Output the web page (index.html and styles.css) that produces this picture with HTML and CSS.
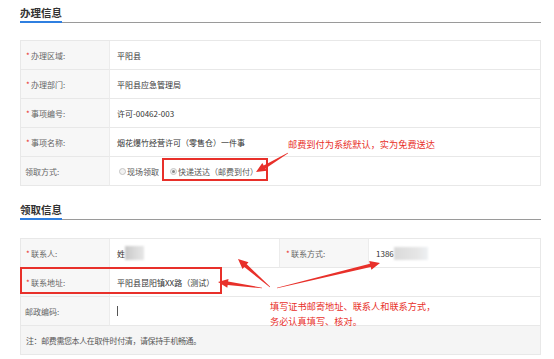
FILE: index.html
```html
<!DOCTYPE html>
<html lang="zh-CN">
<head>
<meta charset="utf-8">
<title>办理信息</title>
<link rel="stylesheet" href="styles.css">
</head>
<body>
<div class="page">
  <div class="sec-head"><span class="sec-title">办理信息</span></div>
  <div class="table t1">
    <div class="lbl"><span class="req">*</span>办理区域:</div>
    <div class="val">平阳县</div>
    <div class="lbl"><span class="req">*</span>办理部门:</div>
    <div class="val">平阳县应急管理局</div>
    <div class="lbl"><span class="req">*</span>事项编号:</div>
    <div class="val">许可-00462-003</div>
    <div class="lbl"><span class="req">*</span>事项名称:</div>
    <div class="val">烟花爆竹经营许可（零售仓）一件事</div>
    <div class="lbl plain">领取方式:</div>
    <div class="val radios">
      <span class="radio"><i class="dot"></i>现场领取</span>
      <span class="radio on"><i class="dot"></i>快递送达（邮费到付）</span>
    </div>
  </div>

  <div class="sec-head second"><span class="sec-title">领取信息</span></div>
  <div class="table t2">
    <div class="lbl"><span class="req">*</span>联系人:</div>
    <div class="val">姓<span class="blur b1"></span></div>
    <div class="lbl lbl2"><span class="req">*</span>联系方式:</div>
    <div class="val">1386<span class="blur b2"></span></div>
    <div class="lbl"><span class="req">*</span>联系地址:</div>
    <div class="val span3">平阳县昆阳镇XX路（测试）</div>
    <div class="lbl plain">邮政编码:</div>
    <div class="val span3"><span class="caret"></span></div>
    <div class="note">注：邮费需您本人在取件时付清，请保持手机畅通。</div>
  </div>

  <div class="anno a1">邮费到付为系统默认，实为免费送达</div>
  <div class="anno a2">填写证书邮寄地址、联系人和联系方式，<br>务必认真填写、核对。</div>

  <svg class="overlay" width="554" height="359" viewBox="0 0 554 359">
    <rect x="163" y="159" width="104" height="21" fill="none" stroke="#e8302a" stroke-width="2"/>
    <rect x="21" y="268" width="200" height="25" fill="none" stroke="#e8302a" stroke-width="2"/>
    <polygon fill="#e8302a" points="288.15,153.26 265.5,168.4 266.9,170.8 256,172 262.3,163.0 263.7,165.4 287.85,152.74"/>
    <polygon fill="#e8302a" points="270.2,286.8 246.7,264.2 248.5,262.2 238,259 242.5,269.0 244.3,267.0 269.8,287.2"/>
    <polygon fill="#e8302a" points="262.04,287.7 228.1,281.6 228.5,278.9 218,282 227.3,287.8 227.7,285.1 261.96,288.3"/>
    <polygon fill="#e8302a" points="277.07,288.3 370.7,267.1 371.4,269.8 380,263 369.2,261.0 369.9,263.7 276.93,287.7"/>
  </svg>
</div>
</body>
</html>
```
FILE: styles.css
```css
* { box-sizing: border-box; }
body {
  margin: 0;
  background: #fff;
  font-family: "Noto Sans CJK SC", "Noto Sans", sans-serif;
  color: #333;
}
.page {
  position: relative;
  width: 554px;
  height: 359px;
  padding-left: 20px;
  overflow: hidden;
}
.sec-head {
  display: flex;
  width: 521px;
  border-bottom: 1px solid #9a9a9a;
}
.sec-head.second { margin-top: 11px; }
.sec-title {
  font-size: 10.5px;
  font-weight: bold;
  line-height: 16px;
  padding-top: 5px;
  color: #333;
  border-bottom: 2px solid #2f7fe0;
  margin-bottom: -1px;
}
.table {
  width: 521px;
  display: grid;
  border: 1px solid #e8e8e8;
  border-bottom: none;
  margin-top: 17px;
  font-size: 8px;
}
.t1 { grid-template-columns: 89px 1fr; }
.t2 { grid-template-columns: 89px 170px 89px 1fr; margin-top: 18px; }
.lbl, .val, .note {
  height: 29px;
  display: flex;
  align-items: center;
  border-bottom: 1px solid #e8e8e8;
  white-space: nowrap;
}
.lbl {
  background: #f7f7f7;
  color: #666;
  padding-left: 5px;
  border-right: 1px solid #ececec;
}
.lbl.plain { padding-left: 4px; }
.lbl2 { padding-left: 6px; }
.req { color: #e8302a; width: 4px; margin-right: 1px; }
.val {
  padding-left: 7px;
  color: #333;
}
.t2 .val:nth-child(2) { border-right: 1px solid #ececec; }
.span3 { grid-column: 2 / -1; }
.radios { gap: 0; }
.radio {
  display: inline-flex;
  align-items: center;
  color: #555;
  margin-left: 2px;
  margin-right: 9px;
}
.dot {
  width: 7px;
  height: 7px;
  border-radius: 50%;
  border: 1px solid #c4c4c4;
  background: #f2f2f2;
  margin-right: 1px;
  display: inline-flex;
  align-items: center;
  justify-content: center;
}
.radio.on .dot::after {
  content: "";
  width: 3px;
  height: 3px;
  border-radius: 50%;
  background: #888;
}
.blur {
  display: inline-block;
  filter: blur(1px);
}
.b1 {
  width: 19px;
  height: 14px;
  background: linear-gradient(90deg, #c8c8c8, #dcdcdc 60%, #e6e6e6);
}
.b2 {
  width: 34px;
  height: 13px;
  background: linear-gradient(90deg, #dadada, #e6e6e6 70%, #eef1f4);
}
.caret {
  display: inline-block;
  width: 1px;
  height: 10px;
  background: #555;
}
.note {
  grid-column: 1 / -1;
  background: #f5f5f5;
  padding-left: 5px;
  color: #555;
  letter-spacing: -0.4px;
}
.anno {
  position: absolute;
  color: #e8302a;
  font-size: 9.2px;
  line-height: 15px;
  white-space: nowrap;
}
.a1 { left: 288px; top: 137px; }
.a2 { left: 270px; top: 299px; }
.overlay {
  position: absolute;
  left: 0;
  top: 0;
  pointer-events: none;
}
```
